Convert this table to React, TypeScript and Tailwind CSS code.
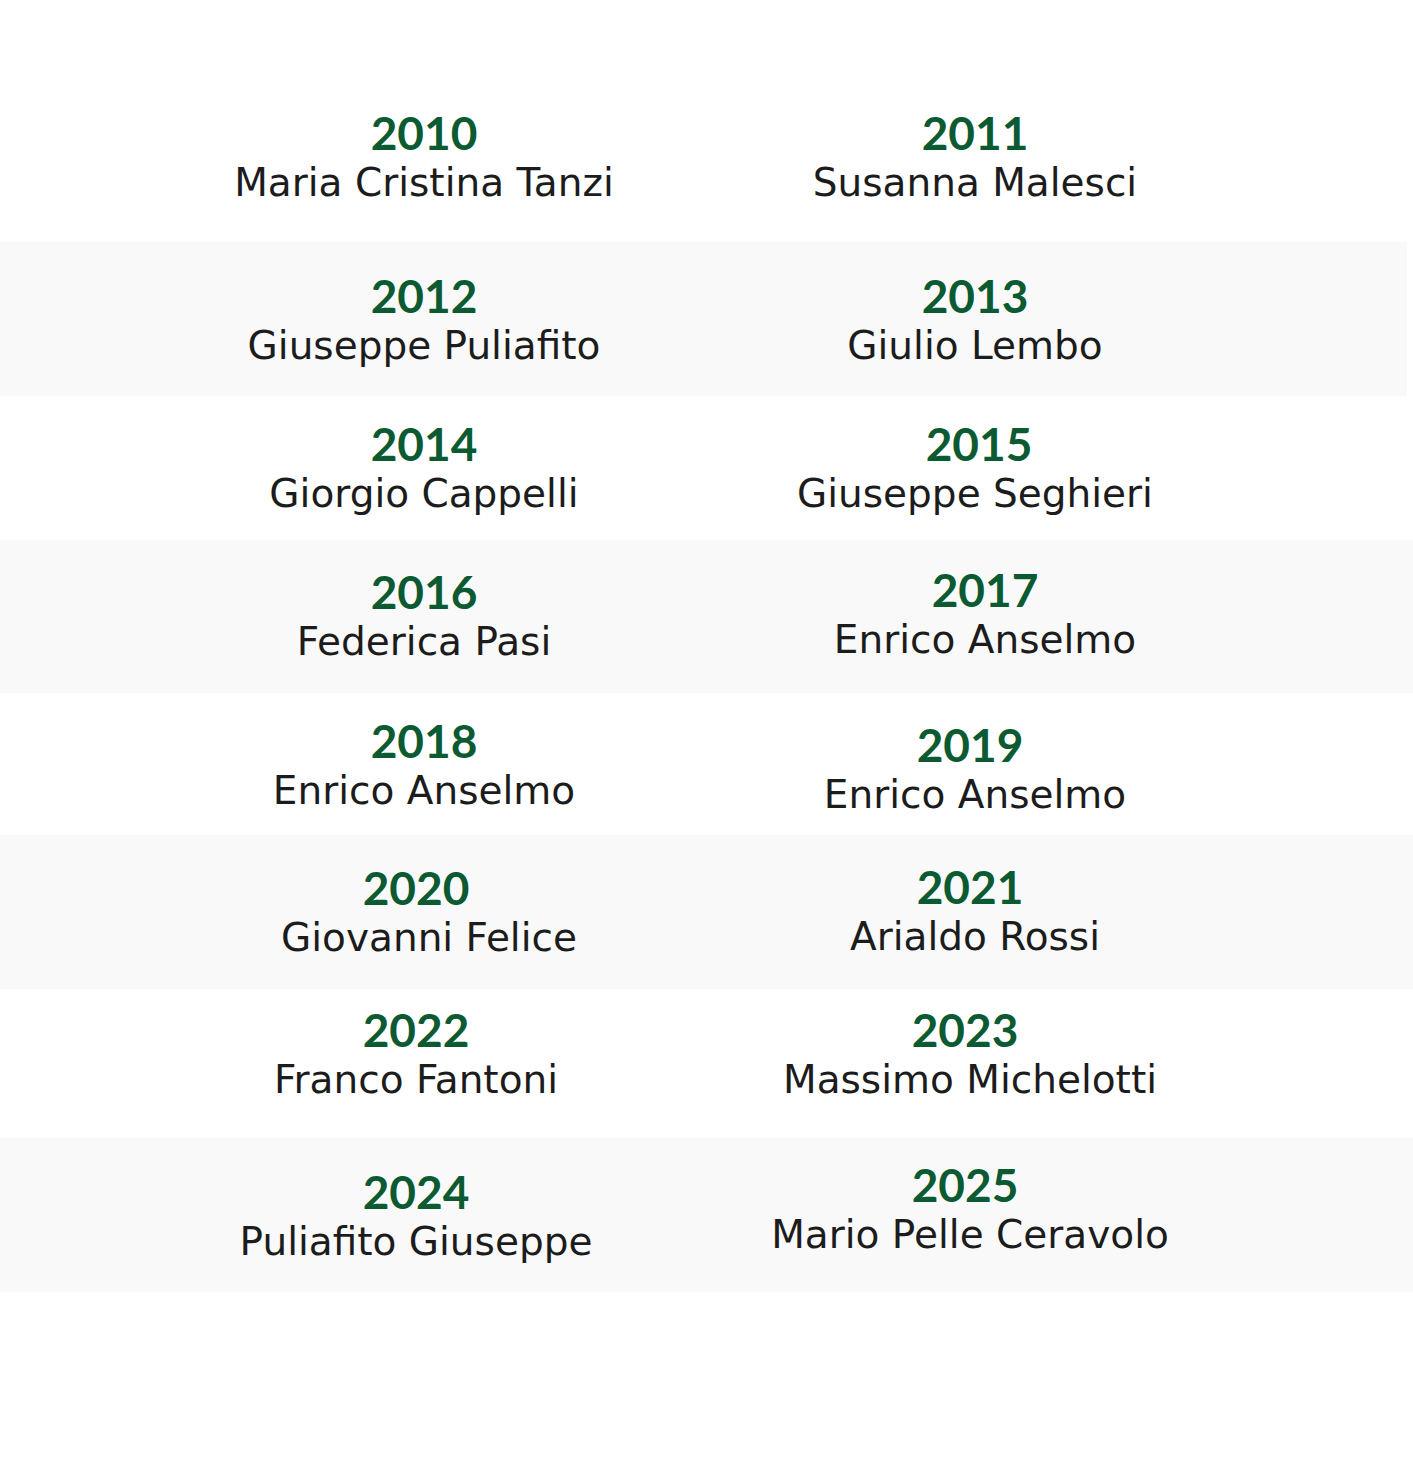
import React from "react";

type Cell = { year: string; name: string; pt: string; yx: string; nx: string };
type Row = { h: string; bg: string; cells: [Cell, Cell] };

const rows: Row[] = [
  {
    h: "h-[242px]",
    bg: "bg-white",
    cells: [
      { year: "2010", name: "Maria Cristina Tanzi", pt: "pt-[108px]", yx: "", nx: "" },
      { year: "2011", name: "Susanna Malesci", pt: "pt-[108px]", yx: "", nx: "" },
    ],
  },
  {
    h: "h-[154px]",
    bg: "bg-[#f9f9f9] mr-[6px]",
    cells: [
      { year: "2012", name: "Giuseppe Puliafito", pt: "pt-[29px]", yx: "", nx: "" },
      { year: "2013", name: "Giulio Lembo", pt: "pt-[29px]", yx: "", nx: "" },
    ],
  },
  {
    h: "h-[144px]",
    bg: "bg-white",
    cells: [
      { year: "2014", name: "Giorgio Cappelli", pt: "pt-[23px]", yx: "", nx: "" },
      { year: "2015", name: "Giuseppe Seghieri", pt: "pt-[23px]", yx: "pl-[8px]", nx: "" },
    ],
  },
  {
    h: "h-[153px]",
    bg: "bg-[#f9f9f9]",
    cells: [
      { year: "2016", name: "Federica Pasi", pt: "pt-[27px]", yx: "", nx: "" },
      { year: "2017", name: "Enrico Anselmo", pt: "pt-[25px]", yx: "pl-[20px]", nx: "pl-[20px]" },
    ],
  },
  {
    h: "h-[142px]",
    bg: "bg-white",
    cells: [
      { year: "2018", name: "Enrico Anselmo", pt: "pt-[23px]", yx: "", nx: "" },
      { year: "2019", name: "Enrico Anselmo", pt: "pt-[27px]", yx: "pr-[10px]", nx: "" },
    ],
  },
  {
    h: "h-[154px]",
    bg: "bg-[#f9f9f9]",
    cells: [
      { year: "2020", name: "Giovanni Felice", pt: "pt-[28px]", yx: "pr-[16px]", nx: "pl-[10px]" },
      { year: "2021", name: "Arialdo Rossi", pt: "pt-[27px]", yx: "pr-[10px]", nx: "" },
    ],
  },
  {
    h: "h-[149px]",
    bg: "bg-white",
    cells: [
      { year: "2022", name: "Franco Fantoni", pt: "pt-[16px]", yx: "pr-[16px]", nx: "pr-[16px]" },
      { year: "2023", name: "Massimo Michelotti", pt: "pt-[16px]", yx: "pr-[20px]", nx: "pr-[10px]" },
    ],
  },
  {
    h: "h-[154px]",
    bg: "bg-[#f9f9f9]",
    cells: [
      { year: "2024", name: "Puliafito Giuseppe", pt: "pt-[29px]", yx: "pr-[16px]", nx: "pr-[16px]" },
      { year: "2025", name: "Mario Pelle Ceravolo", pt: "pt-[22px]", yx: "pr-[20px]", nx: "pr-[10px]" },
    ],
  },
];

function CellView({ c }: { c: Cell }) {
  return (
    <div className={`flex flex-col ${c.pt}`}>
      <div
        className={`text-center leading-[50px] text-[46px] font-bold text-[#0b5a32] whitespace-nowrap ${c.yx}`}
        style={{ fontFamily: "Lato, 'Noto Sans', sans-serif" }}
      >
        {c.year}
      </div>
      <div
        className={`text-center leading-[50px] text-[39px] font-normal text-[#1c1c1c] whitespace-nowrap ${c.nx}`}
        style={{ fontFamily: "'DejaVu Sans', 'Noto Sans', sans-serif" }}
      >
        {c.name}
      </div>
    </div>
  );
}

export default function App() {
  return (
    <div className="w-[1413px] h-[1457px] bg-white overflow-hidden">
      {rows.map((r, i) => (
        <div key={i} className={`${r.h} ${r.bg}`}>
          <div className="grid grid-cols-[548px_554px] pl-[150px]">
            <CellView c={r.cells[0]} />
            <CellView c={r.cells[1]} />
          </div>
        </div>
      ))}
    </div>
  );
}
